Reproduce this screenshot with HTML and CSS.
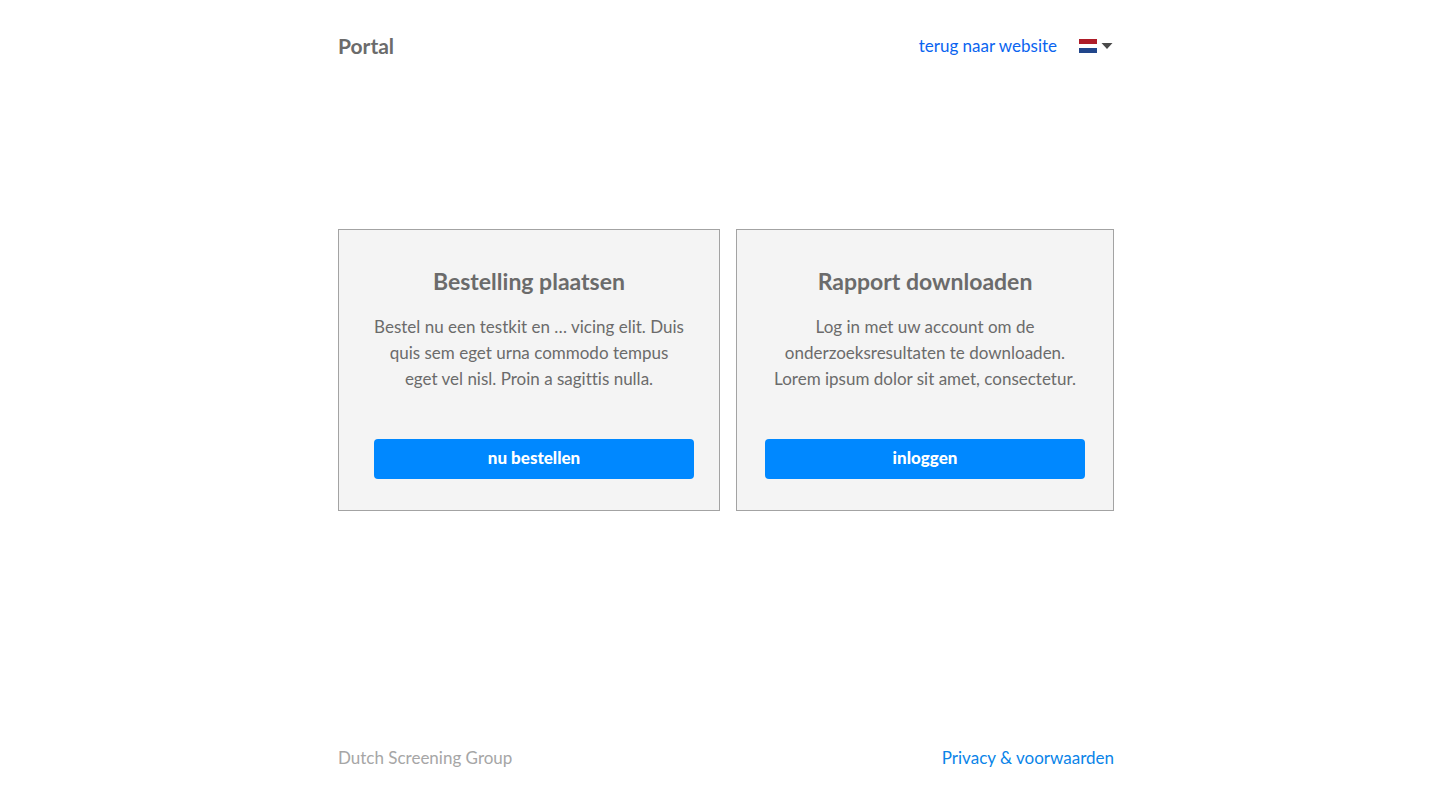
FILE: index.html
```
<!DOCTYPE html>
<html lang="nl">
<head>
    <meta charset="UTF-8">
    <meta name="viewport" content="width=device-width, initial-scale=1.0">
    <title>Portal</title>
    <link rel="stylesheet" href="styles.css">
</head>
<body>
    <div class="container">
        <header class="header">
            <h1 class="brand">Portal</h1>
            <nav class="header-nav">
                <a class="back-link" href="#">terug naar website</a>
                <div class="language">
                    <svg class="flag" width="18" height="14" viewBox="0 0 18 14" aria-hidden="true">
                        <rect width="18" height="14" fill="#fff"/>
                        <rect width="18" height="5" fill="#ae1c28"/>
                        <rect y="9" width="18" height="5" fill="#21468b"/>
                    </svg>
                    <svg width="12" height="6" viewBox="0 0 12 6" aria-hidden="true">
                        <path d="M0.500 0h11L6 6z" fill="#4a4a4a"/>
                    </svg>
                    <select class="language-select" name="language" aria-label="Taal">
                        <option value="nl">NL</option>
                        <option value="en">EN</option>
                    </select>
                </div>
            </nav>
        </header>

        <main class="cards">
            <section class="card card-order">
                <h2>Bestelling plaatsen</h2>
                <p>Bestel nu een testkit en … vicing elit. Duis<br>quis sem eget urna commodo tempus<br>eget vel nisl. Proin a sagittis nulla.</p>
                <button type="button" class="btn">nu bestellen</button>
            </section>
            <section class="card">
                <h2>Rapport downloaden</h2>
                <p>Log in met uw account om de<br>onderzoeksresultaten te downloaden.<br>Lorem ipsum dolor sit amet, consectetur.</p>
                <button type="button" class="btn">inloggen</button>
            </section>
        </main>

        <footer class="footer">
            <span>Dutch Screening Group</span>
            <a href="#">Privacy &amp; voorwaarden</a>
        </footer>
    </div>
</body>
</html>
```
FILE: styles.css
```
* {
    box-sizing: border-box;
}
body {
    margin: 0;
    font-family: Lato, "Open Sans", sans-serif;
    font-size: 17px;
    font-variant-ligatures: none;
    line-height: 26px;
    color: #6b6b6b;
    background-color: #fff;
}
a {
    color: #0a84e8;
    text-decoration: none;
}
a:hover {
    text-decoration: underline;
}
.container {
    display: flex;
    flex-direction: column;
    max-width: 808px;
    min-height: 100vh;
    margin: 0 auto;
    padding: 32px 16px 28px;
}

/* header */
.header,
.footer {
    display: flex;
    align-items: center;
    justify-content: space-between;
}
.brand {
    margin: 0;
    font-size: 21px;
    line-height: 28px;
}
.header-nav {
    display: flex;
    align-items: center;
    gap: 22px;
    padding-right: 1px;
}
.back-link {
    color: #0a64f0;
}
.language {
    position: relative;
    display: flex;
    align-items: center;
    gap: 4px;
}
/* the real select lies invisibly over the flag */
.language-select {
    position: absolute;
    inset: 0;
    width: 100%;
    opacity: 0;
    cursor: pointer;
}

/* cards */
.cards {
    display: grid;
    grid-template-columns: 382fr 378fr;
    gap: 16px;
    margin: auto 0;
    padding-bottom: 66px; /* keeps the cards above the middle */
}
.card {
    display: flex;
    flex-direction: column;
    align-items: center;
    padding: 33px 25px 31px;
    background-color: #f4f4f4;
    border: 1px solid #a3a3a3;
    text-align: center;
}
.card h2 {
    margin: 0 0 15px;
    font-size: 23px;
    line-height: 36px;
}
.card p {
    margin: 0 0 47px;
}
.btn {
    width: 100%;
    max-width: 320px;
    height: 40px;
    padding: 0 0 2px;
    background-color: #0088ff;
    color: #fff;
    font-family: inherit;
    font-size: 17px;
    font-weight: 900;
    border: none;
    border-radius: 4px;
    cursor: pointer;
}
.btn:hover {
    background-color: #0078e6;
}
.card-order .btn {
    align-self: flex-end;
}

/* footer */
.footer {
    color: #a6a6a6;
}
@media (max-width: 700px) {
    .cards {
        grid-template-columns: 1fr;
    }
    .card-order .btn {
        align-self: center;
    }
}
```
